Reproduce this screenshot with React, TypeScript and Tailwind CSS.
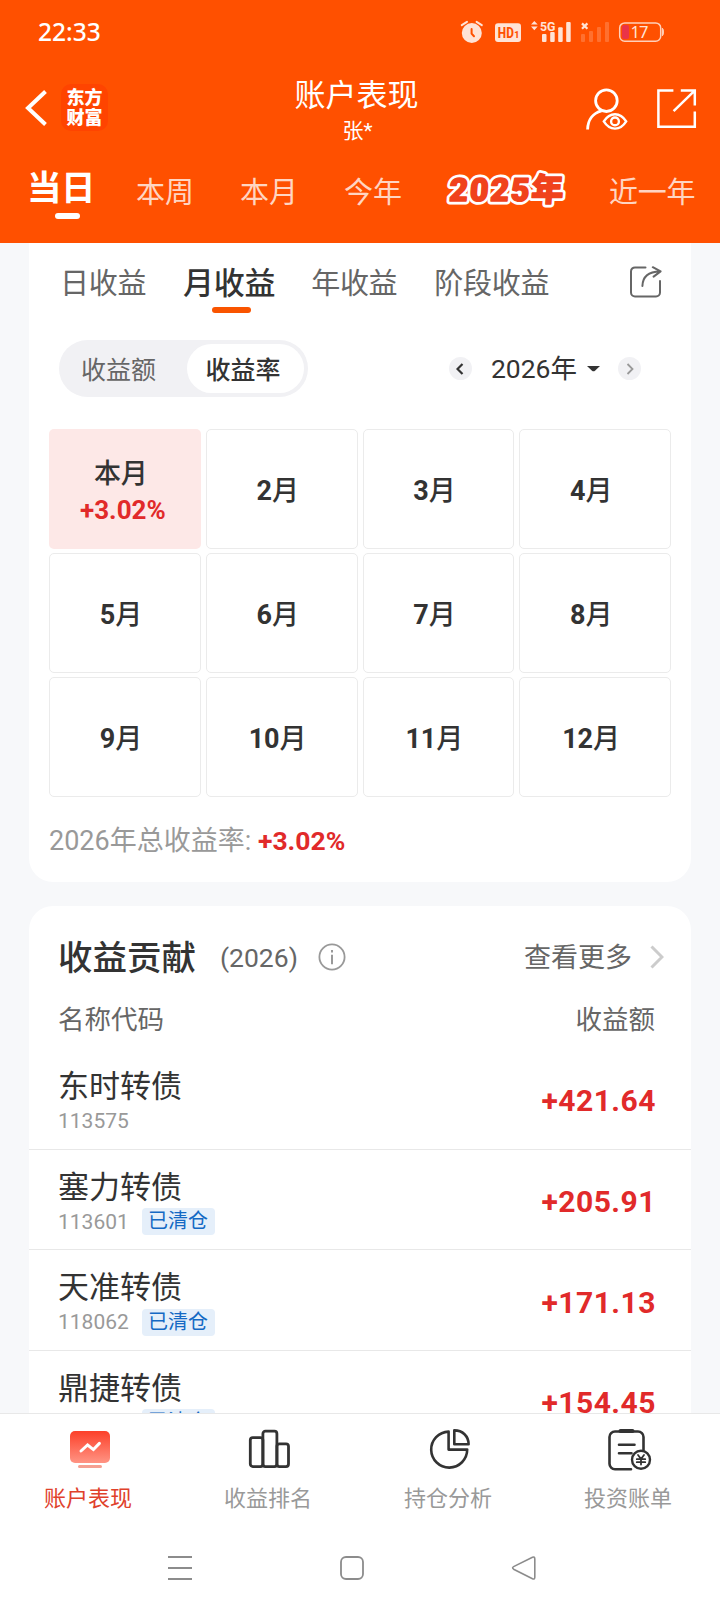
import { useState } from 'react';

const ranges = [
  { label: '本周', margin: 'ml-[42px]' },
  { label: '本月', margin: 'ml-[46px]' },
  { label: '今年', margin: 'ml-[46px]' },
];

const months = ['本月', '2月', '3月', '4月', '5月', '6月', '7月', '8月', '9月', '10月', '11月', '12月'];

const bonds = [
  { name: '东时转债', code: '113575', amount: '+421.64', closed: false },
  { name: '塞力转债', code: '113601', amount: '+205.91', closed: true },
  { name: '天准转债', code: '118062', amount: '+171.13', closed: true },
  { name: '鼎捷转债', code: '', amount: '+154.45', closed: true },
];

function StatusIcons() {
  return (
    <svg width="208" height="32" viewBox="0 0 208 32" fill="#ffe3d6">
      {/* alarm */}
      <circle cx="12.8" cy="17" r="10" />
      <path d="M2.8 9.2 8 5.8M17.6 5.8l5.2 3.4" stroke="#ffe3d6" strokeWidth="2" strokeLinecap="round" />
      <path d="M12.6 13v4.6l2.4 2.6" stroke="#ff5000" strokeWidth="2" fill="none" strokeLinecap="round" />
      {/* HD */}
      <rect x="36" y="7.3" width="26" height="18.6" rx="3" />
      <text x="38.8" y="21.8" fontSize="14.5" fontWeight="800" fill="#ff5000" textLength="16" lengthAdjust="spacingAndGlyphs">HD</text>
      <text x="55.2" y="21.8" fontSize="9" fontWeight="800" fill="#ff5000">1</text>
      {/* 5G signal */}
      <path d="M72 8.6 75.3 5l3.4 3.6zM72 10.6h6.7l-3.4 3.6z" />
      <text x="81" y="14.6" fontSize="13.5" fontWeight="700" textLength="15.5" lengthAdjust="spacingAndGlyphs">5G</text>
      <rect x="83" y="18" width="4.5" height="8" rx="1" />
      <rect x="91.2" y="16" width="4.5" height="10" rx="1" />
      <rect x="99.2" y="11.3" width="4.5" height="14.7" rx="1" />
      <rect x="107.2" y="6" width="4.5" height="20" rx="1" />
      {/* empty sim */}
      <path d="m123 7.4 5.4 5.4m0-5.4L123 12.8" stroke="#ffe3d6" strokeWidth="2.2" />
      <g opacity="0.22">
        <rect x="122" y="18" width="4" height="8" rx="1" />
        <rect x="130" y="15" width="4" height="11" rx="1" />
        <rect x="138" y="11" width="4" height="15" rx="1" />
        <rect x="146" y="6" width="4" height="20" rx="1" />
      </g>
      {/* battery */}
      <rect x="160.7" y="6.9" width="41" height="18.4" rx="5" fill="none" stroke="#ffd0ba" strokeWidth="1.5" />
      <rect x="163" y="9" width="7" height="14" rx="2" fill="#ea3348" />
      <path d="M203.4 12.2c1.4.6 1.4 7 0 7.6z" stroke="#ffd0ba" />
      <text x="171.5" y="21.8" fontSize="16.5" textLength="18" fontFamily="Noto Sans">17</text>
    </svg>
  );
}

function UserEyeIcon() {
  return (
    <svg width="42" height="42" viewBox="0 0 42 42" fill="none" stroke="#fff" strokeWidth="2.8">
      <circle cx="20.4" cy="12.7" r="10.8" />
      <path d="M1.6 41.5C1.8 32 7 25 15.5 22.8" />
      <path d="M17.8 33.4c3-4.8 6.8-7.2 11.2-7.2s8.2 2.4 11.2 7.2c-3 4.8-6.8 7.2-11.2 7.2s-8.2-2.4-11.2-7.2Z" strokeWidth="2.4" />
      <circle cx="29" cy="33.4" r="3.9" strokeWidth="2.4" />
    </svg>
  );
}

function OpenIcon() {
  return (
    <svg width="40" height="40" viewBox="0 0 40 40" fill="none" stroke="#fff" strokeWidth="2.5">
      <path d="M16.4 1.4H1.4v36.4h36.4V22.4M23.8 1.4h14v15M37.400 1.800 16.600 22.200" />
    </svg>
  );
}

function ShareIcon() {
  return (
    <svg width="32" height="32" viewBox="0 0 32 32" fill="none" stroke="#666" strokeWidth="2" strokeLinecap="round" strokeLinejoin="round">
      <path d="M15.5 1.4H5a4 4 0 0 0-4 4v21a4 4 0 0 0 4 4h21a4 4 0 0 0 4-4V15" />
      <path d="M12.4 20C12.6 11 18 5.5 30 5.4M22.8 1.2 30.6 5.4 23.6 10.6" />
    </svg>
  );
}

// Outlined sticker style label: white halo under a thickened orange face
function YearBadge() {
  const face = { fontSize: 32, fontWeight: 900, textLength: 114, transform: 'skewX(-4)' };
  return (
    <svg width="126" height="40" viewBox="0 0 126 40" strokeLinejoin="round" className="ml-[41px] mt-[16px]">
      <text x="8" y="31" {...face} fill="#fff" stroke="#fff" strokeWidth="7">2025年</text>
      <text x="8" y="31" {...face} fill="#f0421c" stroke="#f0421c" strokeWidth="1.6">2025年</text>
    </svg>
  );
}

function AccountIcon() {
  return (
    <svg width="44" height="42" viewBox="0 0 44 42" fill="none">
      <defs>
        <linearGradient id="screen" x1="0" y1="0" x2="0" y2="1">
          <stop offset="0" stopColor="#fc4029" />
          <stop offset="1" stopColor="#ff9484" />
        </linearGradient>
      </defs>
      <rect x="2" y="2" width="40" height="32" rx="5" fill="url(#screen)" />
      <path d="m13 22 6.600-6 5.800 4.600 6-6.200" stroke="#fff" strokeWidth="3" strokeLinecap="round" />
      <rect x="10" y="36" width="24" height="3" rx="1.5" fill="#f5a092" />
    </svg>
  );
}

function RankIcon() {
  return (
    <svg width="44" height="42" viewBox="0 0 44 42" fill="none" stroke="#333" strokeWidth="2.8">
      <rect x="2.300" y="8.600" width="12.600" height="29" rx="2.5" />
      <rect x="14.900" y="2.200" width="14" height="35.400" rx="2.5" />
      <rect x="28.900" y="14.800" width="11.600" height="22.800" rx="2.5" />
    </svg>
  );
}

function PieIcon() {
  return (
    <svg width="44" height="42" viewBox="0 0 44 42" fill="none" stroke="#333" strokeWidth="2.6" strokeLinejoin="round">
      <path d="M20.600 2.600a18 18 0 1 0 18.600 18H20.600Z" />
      <path d="M26.300 1.400V15.300H40.600C40.600 7 34.500 1.400 26.300 1.400Z" />
    </svg>
  );
}

function BillIcon() {
  return (
    <svg width="46" height="44" viewBox="0 0 46 44" fill="none" stroke="#333" strokeWidth="2.6" strokeLinecap="round">
      <path d="M24 40.300H8a5.500 5.500 0 0 1-5.500-5.500V8A5.500 5.500 0 0 1 8 2.500h23A5.500 5.500 0 0 1 36.500 8v13" />
      <path d="M13.500 2h12" strokeWidth="4" />
      <path d="M12 15.800h15.500M12 24.300h12.500" />
      <circle cx="34" cy="30.800" r="9" fill="#fff" strokeWidth="2.400" />
      <path d="M31 26l3 4 3-4M34 30v5.500M29.800 30.200h8.400M29.800 33.200h8.400" strokeWidth="1.800" />
    </svg>
  );
}

const tabs = [
  { label: '账户表现', Icon: AccountIcon },
  { label: '收益排名', Icon: RankIcon },
  { label: '持仓分析', Icon: PieIcon },
  { label: '投资账单', Icon: BillIcon },
];

export default function App() {
  const [activeTab, setActiveTab] = useState(0);

  return (
    <main className="w-[720px] h-[1612px] overflow-hidden flex flex-col bg-[#f7f8fa] text-[#333] leading-none whitespace-nowrap font-['Roboto','Noto_Sans_CJK_SC',sans-serif]">
      {/* Header */}
      <header className="h-[243px] shrink-0 bg-[#ff5000] text-white">
        <div className="h-16 pl-[38px] pr-[53px] flex items-center justify-between">
          <span className="text-[24.5px] font-medium font-['Noto_Sans']">22:33</span>
          <StatusIcons />
        </div>

        <div className="h-[90px] px-[22px] grid grid-cols-[1fr_auto_1fr] items-center">
          <div className="flex items-center">
            <svg width="28" height="40" viewBox="0 0 28 40" fill="none" stroke="#fff" strokeWidth="4" className="-mt-[2px]">
              <path d="M23.500 3.500 6 20l17.500 16.500" />
            </svg>
            <div className="w-[47px] h-[47px] ml-[11px] -mt-[3px] rounded-[10px] bg-[#ff4400] flex flex-col items-center justify-center text-[18px] leading-[20px] font-black">
              <span>东方</span>
              <span>财富</span>
            </div>
          </div>
          <div className="flex flex-col items-center -ml-[7px] mt-[5px]">
            <h1 className="text-[31px] leading-[38px]">账户表现</h1>
            <p className="text-[21px] leading-[30px] mt-[1px] ml-[2px]">张*</p>
          </div>
          <div className="flex items-center justify-end gap-[29px] pr-[1px]">
            <UserEyeIcon />
            <OpenIcon />
          </div>
        </div>

        <nav className="h-[89px] pl-[30px] flex items-start text-[29px] text-[#ffd5c2]">
          <div className="w-[64px] flex flex-col items-center text-white">
            <span className="text-[34.5px] leading-[44px] font-bold mt-[12px] -ml-[3px] w-[67px] tracking-[-0.5px]">当日</span>
            <span className="w-[25px] h-[6px] mt-[3px] ml-[11px] rounded-full bg-white" />
          </div>
          {ranges.map(({ label, margin }) => (
            <span key={label} className={`${margin} leading-[40px] mt-[19px]`}>{label}</span>
          ))}
          <YearBadge />
          <span className="ml-[40px] leading-[40px] mt-[19px] tracking-[-0.3px]">近一年</span>
        </nav>
      </header>

      <div className="flex-1 min-h-0 px-[29px] overflow-hidden">
        {/* Monthly returns */}
        <section className="h-[639px] bg-white rounded-b-[24px] px-5">
          <div className="h-[80px] pl-[11px] pr-[9px] pt-[21px] flex items-start text-[29px] tracking-[-0.3px] leading-[40px] text-[#666]">
            <span>日收益</span>
            <div className="ml-[37px] flex flex-col items-center">
              <span className="text-[31px] font-medium text-[#333]">月收益</span>
              <span className="w-[39px] h-[6px] mt-[3px] ml-[4px] rounded-full bg-[#f95400]" />
            </div>
            <span className="ml-[36px]">年收益</span>
            <span className="ml-[37px]">阶段收益</span>
            <span className="ml-auto mt-[2px]"><ShareIcon /></span>
          </div>

          <div className="h-[106px] pt-[17px] pl-[10px] pr-[30px] flex items-start">
            <div className="w-[249px] h-[57px] p-1 rounded-full bg-[#f1f1f4] flex items-center text-[25px]">
              <span className="w-[125px] pl-[18px] pt-[3px] text-[#666]">收益额</span>
              <span className="w-[117px] h-[49px] rounded-full bg-white flex items-center pl-[18px] pt-[3px] font-medium">收益率</span>
            </div>
            <div className="ml-auto h-[57px] flex items-center">
              <span className="w-[23px] h-[23px] rounded-full bg-[#f1f1f4] flex items-center justify-center">
                <svg width="8" height="12" viewBox="0 0 8 12" fill="none" stroke="#333" strokeWidth="2.200">
                  <path d="M6.500 1 1.500 6l5 5" />
                </svg>
              </span>
              <span className="ml-[19px] pt-[2px] text-[26.5px]">2026年</span>
              <svg width="13" height="6" viewBox="0 0 13 6" className="ml-[10px] fill-[#333]">
                <path d="M0 0h13L8 4.800q-1.500 1-3 0z" />
              </svg>
              <span className="ml-[18px] w-[23px] h-[23px] rounded-full bg-[#f1f1f4] flex items-center justify-center">
                <svg width="8" height="12" viewBox="0 0 8 12" fill="none" stroke="#999" strokeWidth="1.800">
                  <path d="m1.500 1 5 5-5 5" />
                </svg>
              </span>
            </div>
          </div>

          <div className="grid grid-cols-4 gap-x-[5px] gap-y-1">
            {months.map((month, idx) => (
              <div
                key={month}
                className={`h-[120px] rounded-[5px] flex flex-col items-center justify-center text-[27px] ${
                  idx === 0 ? 'bg-[#fde8e7] font-medium' : 'border border-[#ebebeb] font-bold'
                }`}
              >
                <span className="mr-[8px] mt-[5px]">
                  {idx === 0 ? month : month.replace('月', '')}
                  {idx > 0 && <span className="font-medium">月</span>}
                </span>
                {idx === 0 && <span className="mt-[9px] mr-[4px] text-[26px] font-bold text-[#e12a2a]">+3.02%</span>}
              </div>
            ))}
          </div>

          <p className="mt-[31px] text-[27px] text-[#999]">
            2026年总收益率: <span className="text-[26.5px] font-bold text-[#e12a2a]">+3.02%</span>
          </p>
        </section>

        {/* Contribution list */}
        <section className="mt-6 bg-white rounded-t-[24px]">
          <div className="h-[100px] pl-[29px] pr-[27px] pt-[2px] flex items-center">
            <h2 className="text-[34.5px] pt-[2px] font-medium">收益贡献</h2>
            <span className="ml-[24px] text-[26.5px] pt-[2px] text-[#666]">(2026)</span>
            <svg width="28" height="28" viewBox="0 0 28 28" fill="none" stroke="#999" strokeWidth="1.800" className="ml-[20px]">
              <circle cx="14" cy="14" r="12.600" />
              <path d="M14 11.800v9.500M14 7v2.400" strokeWidth="2" />
            </svg>
            <span className="ml-auto text-[27px] pt-[2px] text-[#666]">查看更多</span>
            <svg width="14" height="24" viewBox="0 0 14 24" fill="none" stroke="#ccc" strokeWidth="3" className="ml-[18px]">
              <path d="m1.500 1.500 10.500 10.500L1.500 22.500" />
            </svg>
          </div>
          <div className="h-[43px] pt-[1px] pl-[29px] pr-[36px] flex justify-between text-[26.5px] text-[#666]">
            <span>名称代码</span>
            <span>收益额</span>
          </div>
          {bonds.map(({ name, code, amount, closed }) => (
            <div key={name} className="h-[100.7px] pl-[29px] pr-[35px] flex items-center justify-between border-b border-[#e8e8e8]">
              <div className="pt-[6px]">
                <p className="text-[31px] leading-[38px]">{name}</p>
                <div className="h-[30px] flex items-center text-[21px] text-[#999]">
                  <span className="w-[84px] pt-[1px]">{code}</span>
                  {closed && (
                    <span className="w-[73px] h-[27px] rounded-[4px] bg-[#e5effa] text-[#1469c4] text-[20px] leading-[26px] pl-[6px]">已清仓</span>
                  )}
                </div>
              </div>
              <span className="pt-[5px] text-[30px] font-bold tracking-[0.5px] text-[#e12a2a]">{amount}</span>
            </div>
          ))}
        </section>
      </div>

      {/* Tab bar */}
      <footer className="h-[199px] shrink-0 bg-white border-t border-[#e8e8e8]">
        <div className="h-[125px] grid grid-cols-4">
          {tabs.map(({ label, Icon }, idx) => (
            <button key={label} onClick={() => setActiveTab(idx)} className="flex flex-col items-center pt-[15px]">
              <span className="h-[44px]"><Icon /></span>
              <span className={`mt-[15px] mr-[4px] text-[22px] ${idx === activeTab ? 'text-[#e0412b]' : 'text-[#999]'}`}>{label}</span>
            </button>
          ))}
        </div>
        {/* System navigation */}
        <div className="h-[58px] pl-[167px] flex items-center">
          <svg width="26" height="26" viewBox="0 0 26 26" stroke="#8c8c8c" strokeWidth="1.800">
            <path d="M1 2h24M1 13h24M1 24h24" />
          </svg>
          <svg width="26" height="26" viewBox="0 0 26 26" fill="none" stroke="#8c8c8c" strokeWidth="1.800" className="ml-[146px]">
            <rect x="2" y="2" width="22" height="22" rx="5" />
          </svg>
          <svg width="26" height="26" viewBox="0 0 26 26" fill="none" stroke="#8c8c8c" strokeWidth="1.600" strokeLinejoin="round" className="ml-[146px]">
            <path d="M21.500 2.200 2.600 11.600q-2 1.200 0 2.600l18.900 9.600q2.300.8 2.300-1.600V4q0-2.600-2.300-1.800Z" />
          </svg>
        </div>
      </footer>
    </main>
  );
}
